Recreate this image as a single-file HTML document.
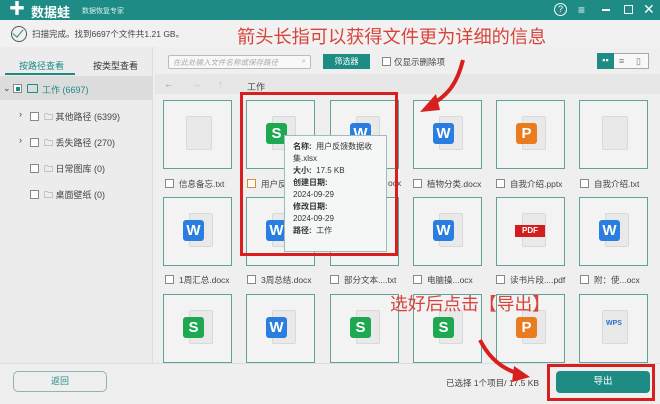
<!DOCTYPE html>
<html><head><meta charset="utf-8"><style>
*{margin:0;padding:0;box-sizing:border-box}
body{width:660px;height:404px;overflow:hidden;background:#efefef;font-family:"Liberation Sans","Noto Sans CJK SC",sans-serif;position:relative;font-size:9px;color:#333}
.a{position:absolute}
.card{position:absolute;width:69px;height:69px;border:1.5px solid #5fa39c;background:#f3f3f3}
.pg{position:absolute;left:25px;top:15px;width:24px;height:34px;background:#e9e9e9;border:1px solid #d9d9d9;border-radius:2px}
.bd{position:absolute;left:19px;top:22px;width:21px;height:21px;border-radius:3px;color:#fff;font-weight:bold;font-size:15px;text-align:center;line-height:21px}
.S{background:#1fa852}.W{background:#2a7ee0}.P{background:#ea7b1f}
.lab{position:absolute;font-size:8.5px;color:#444;white-space:nowrap}
.cb{display:inline-block;width:9px;height:9px;border:1px solid #888;background:#fff;vertical-align:-1px;margin-right:5px}
.red{color:#d8443c;font-family:"Noto Sans CJK SC",sans-serif}
.tr{position:absolute;font-size:9px;color:#444;white-space:nowrap}
</style></head><body>
<div class="a" style="left:0;top:0;width:660px;height:20px;background:#1e8b84"></div>
<div class="a" style="left:9px;top:3px;width:14px;height:14px;color:#fff;font-size:16px;font-weight:bold;line-height:14px">✚</div>
<div class="a" style="left:31px;top:2px;color:#fff;font-size:13px;font-weight:bold">数据蛙</div>
<div class="a" style="left:82px;top:6px;color:#d8eeec;font-size:7px">数据恢复专家</div>
<div class="a" style="left:554px;top:3px;width:13px;height:13px;border:1.5px solid #fff;border-radius:50%;color:#fff;font-size:9px;text-align:center;line-height:10px">?</div>
<div class="a" style="left:578px;top:5px;color:#fff;font-size:12px;line-height:10px">≡</div>
<div class="a" style="left:602px;top:9px;width:8px;height:1.5px;background:#fff"></div>
<div class="a" style="left:624px;top:5px;width:9px;height:9px;border:1.5px solid #fff"></div>
<div class="a" style="left:643px;top:1px;color:#fff;font-size:14px">✕</div>
<div class="a" style="left:0;top:20px;width:660px;height:27px;background:#f1f1f1"></div>
<div class="a" style="left:11px;top:26px;width:16px;height:16px;border:1.3px solid #555;border-radius:50%"></div>
<div class="a" style="left:15px;top:27px;width:6px;height:10px;border-right:1.5px solid #1e8b84;border-bottom:1.5px solid #1e8b84;transform:rotate(40deg)"></div>
<div class="a" style="left:32px;top:28px;font-size:8.5px;color:#444">扫描完成。找到6697个文件共1.21 GB。</div>
<div class="a red" style="left:237px;top:23px;font-size:18.2px">箭头长指可以获得文件更为详细的信息</div>
<div class="a" style="left:0;top:47px;width:153px;height:316px;background:#ececec;border-right:1px solid #ddd"></div>
<div class="a" style="left:19px;top:59px;font-size:9px;color:#1e8b84">按路径查看</div>
<div class="a" style="left:93px;top:59px;font-size:9px;color:#333">按类型查看</div>
<div class="a" style="left:5px;top:73px;width:70px;height:2px;background:#1e8b84"></div>
<div class="a" style="left:0;top:76px;width:153px;height:24px;background:#dcdcdc"></div>
<div class="tr" style="left:3px;top:83px">⌄</div>
<div class="a" style="left:13px;top:84px;width:9px;height:9px;border:1px solid #888;background:#fff"><div style="margin:1.5px;width:4px;height:4px;background:#1e8b84"></div></div>
<div class="a" style="left:27px;top:84px;width:11px;height:9px;border:1px solid #1e8b84;border-radius:1px"></div>
<div class="tr" style="left:42px;top:83px;color:#1e8b84">工作 (6697)</div>
<div class="tr" style="left:19px;top:109px">›</div><div class="tr" style="left:30px;top:110px"><span class="cb"></span>🗀 其他路径 (6399)</div>
<div class="tr" style="left:19px;top:135px">›</div><div class="tr" style="left:30px;top:136px"><span class="cb"></span>🗀 丢失路径 (270)</div>
<div class="tr" style="left:30px;top:162px"><span class="cb"></span>🗀 日常图库 (0)</div>
<div class="tr" style="left:30px;top:188px"><span class="cb"></span>🗀 桌面壁纸 (0)</div>
<div class="a" style="left:168px;top:55px;width:143px;height:14px;border:1px solid #bbb;border-radius:2px;background:#f8f8f8;font-size:7.5px;color:#aaa;padding:1px 4px;font-style:italic">在此处输入文件名称或保存路径<span style="position:absolute;right:4px;top:0;font-style:normal">⌕</span></div>
<div class="a" style="left:323px;top:54px;width:47px;height:15px;background:#1e8b84;color:#fff;font-size:8px;text-align:center;line-height:15px">筛选器</div>
<div class="tr" style="left:382px;top:56px;font-size:8.5px"><span class="cb" style="margin-right:3px"></span>仅显示删除项</div>
<div class="a" style="left:597px;top:53px;width:52px;height:16px;border:1px solid #aaa;background:#f8f8f8"></div>
<div class="a" style="left:597px;top:53px;width:17px;height:16px;background:#1e8b84;color:#fff;font-size:9px;text-align:center;line-height:15px">▪▪</div>
<div class="tr" style="left:619px;top:56px;color:#777">≡</div>
<div class="tr" style="left:636px;top:56px;color:#777">▯</div>
<div class="a" style="left:155px;top:74px;width:505px;height:20px;background:#e7e7e7"></div>
<div class="tr" style="left:164px;top:79px;color:#888">←</div>
<div class="tr" style="left:192px;top:79px;color:#bbb">→</div>
<div class="tr" style="left:218px;top:79px;color:#bbb">↑</div>
<div class="tr" style="left:247px;top:80px">工作</div>
<div class="card" style="left:163px;top:100px"><div class="pg" style="left:22px;width:26px"></div></div>
<div class="card" style="left:246px;top:100px"><div class="pg"></div><div class="bd S">S</div></div>
<div class="card" style="left:330px;top:100px"><div class="pg"></div><div class="bd W">W</div></div>
<div class="card" style="left:413px;top:100px"><div class="pg"></div><div class="bd W">W</div></div>
<div class="card" style="left:496px;top:100px"><div class="pg"></div><div class="bd P">P</div></div>
<div class="card" style="left:579px;top:100px"><div class="pg" style="left:22px;width:26px"></div></div>
<div class="lab" style="left:165px;top:178px"><span class="cb"></span>信息备忘.txt</div>
<div class="lab" style="left:247px;top:178px"><span class="cb" style="border-color:#e08a2a"></span>用户反</div>
<div class="lab" style="left:388px;top:178px">ocx</div>
<div class="lab" style="left:413px;top:178px"><span class="cb"></span>植物分类.docx</div>
<div class="lab" style="left:496px;top:178px"><span class="cb"></span>自我介绍.pptx</div>
<div class="lab" style="left:580px;top:178px"><span class="cb"></span>自我介绍.txt</div>
<div class="card" style="left:163px;top:197px"><div class="pg"></div><div class="bd W">W</div></div>
<div class="card" style="left:246px;top:197px"><div class="pg"></div><div class="bd W">W</div></div>
<div class="card" style="left:330px;top:197px"></div>
<div class="card" style="left:413px;top:197px"><div class="pg"></div><div class="bd W">W</div></div>
<div class="card" style="left:496px;top:197px"><div class="pg"></div><div class="a" style="left:18px;top:27px;width:30px;height:12px;background:#d41e1e;color:#fff;font-size:8px;font-weight:bold;text-align:center;line-height:12px">PDF</div></div>
<div class="card" style="left:579px;top:197px"><div class="pg"></div><div class="bd W">W</div></div>
<div class="lab" style="left:165px;top:274px"><span class="cb"></span>1周汇总.docx</div>
<div class="lab" style="left:247px;top:274px"><span class="cb"></span>3周总结.docx</div>
<div class="lab" style="left:330px;top:274px"><span class="cb"></span>部分文本....txt</div>
<div class="lab" style="left:413px;top:274px"><span class="cb"></span>电脑操...ocx</div>
<div class="lab" style="left:496px;top:274px"><span class="cb"></span>读书片段....pdf</div>
<div class="lab" style="left:580px;top:274px"><span class="cb"></span>附：使...ocx</div>
<div class="card" style="left:163px;top:294px"><div class="pg"></div><div class="bd S">S</div></div>
<div class="card" style="left:246px;top:294px"><div class="pg"></div><div class="bd W">W</div></div>
<div class="card" style="left:330px;top:294px"><div class="pg"></div><div class="bd S">S</div></div>
<div class="card" style="left:413px;top:294px"><div class="pg"></div><div class="bd S">S</div></div>
<div class="card" style="left:496px;top:294px"><div class="pg"></div><div class="bd P">P</div></div>
<div class="card" style="left:579px;top:294px"><div class="pg" style="left:22px;width:26px"></div><div class="a" style="left:26px;top:25px;color:#2a6fc9;font-size:7px;font-weight:bold">WPS</div></div>
<div class="a" style="left:284px;top:135px;width:103px;height:117px;background:#f5f7f6;border:1px solid #9cbdb8;font-size:8px;color:#333;padding:5px 8px;line-height:12px">
<b>名称:</b>&nbsp; 用户反馈数据收集.xlsx<br><b>大小:</b>&nbsp; 17.5 KB<br><b>创建日期:</b><br>2024-09-29<br><b>修改日期:</b><br>2024-09-29<br><b>路径:</b>&nbsp; 工作</div>
<div class="a" style="left:240px;top:92px;width:158px;height:164px;border:3px solid #d91e1e"></div>
<div class="a" style="left:0;top:363px;width:660px;height:41px;background:#efefef;border-top:1px solid #ddd"></div>
<div class="a" style="left:13px;top:371px;width:94px;height:21px;border:1.5px solid #8fb5b0;border-radius:5px;text-align:center;line-height:18px;font-size:9px;color:#1e8b84">返回</div>
<div class="tr" style="left:446px;top:377px;font-size:8.5px">已选择 1个项目/ 17.5 KB</div>
<div class="a" style="left:547px;top:364px;width:108px;height:37px;border:3px solid #d91e1e"></div>
<div class="a" style="left:556px;top:371px;width:94px;height:22px;background:#1e8b84;border-radius:4px;color:#fff;font-size:9.5px;text-align:center;line-height:22px">导出</div>
<div class="a red" style="left:390px;top:290px;font-size:17.8px">选好后点击【导出】</div>
<svg class="a" style="left:0;top:0" width="660" height="404">
<path d="M463 60 C458 80 450 95 430 105" stroke="#d91e1e" stroke-width="4" fill="none"/>
<path d="M420 112 L436 94 L440 110 Z" fill="#d91e1e"/>
<path d="M480 340 C490 360 505 370 520 374" stroke="#d91e1e" stroke-width="4" fill="none"/>
<path d="M530 377 L514 366 L512 382 Z" fill="#d91e1e"/>
</svg>
</body></html>
